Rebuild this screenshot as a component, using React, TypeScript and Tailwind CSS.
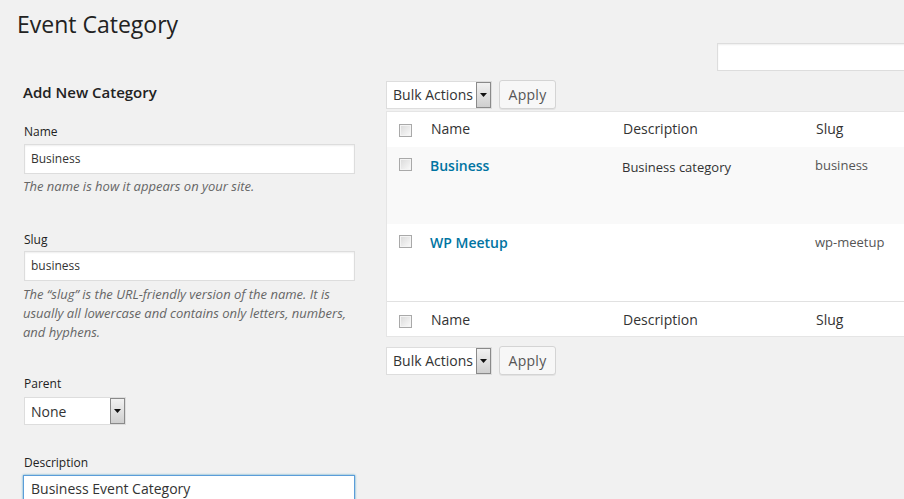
import React from "react";

function Checkbox() {
  return (
    <div className="h-[13px] w-[13px] border border-[#a9a9a9] bg-gradient-to-br from-[#d9d9d9] to-[#fbfbfb] shadow-[inset_0_0_0_1px_#f4f4f4]" />
  );
}

function Select({ label, width }: { label: string; width: string }) {
  return (
    <div className={`flex h-[28px] ${width} items-stretch border border-[#ddd] bg-white`}>
      <div className="flex flex-1 items-center pl-[6px] text-[14px] text-[#333]">{label}</div>
      <div className="flex w-[15px] items-center justify-center border border-[#8a8a8a] bg-gradient-to-b from-[#f2f2f2] to-[#cfcfcf]">
        <svg width="7" height="4" viewBox="0 0 7 4">
          <path d="M0 0h7L3.5 4z" fill="#111" />
        </svg>
      </div>
    </div>
  );
}

function ApplyButton() {
  return (
    <div className="flex h-[29px] w-[57px] items-center justify-center rounded-[3px] border border-[#d4d4d4] bg-[#f7f7f7] text-[14px] tracking-[0.3px] text-[#555] shadow-[0_1px_0_rgba(0,0,0,0.06)]">
      Apply
    </div>
  );
}

function BulkBar() {
  return (
    <div className="flex items-center gap-[7px]">
      <Select label="Bulk Actions" width="w-[106px]" />
      <ApplyButton />
    </div>
  );
}

function HeadRow({ top }: { top: boolean }) {
  return (
    <div className={`flex h-[35px] ${top ? "" : "border-t border-[#e1e1e1]"} bg-white`}>
      <div className={`w-[34px] pl-[12px] ${top ? "pt-[12px]" : "pt-[13px]"}`}>
        <Checkbox />
      </div>
      <div className={`w-[192px] pl-[10px] ${top ? "pt-[7px]" : "pt-[8px]"} text-[14px] leading-[20px] text-[#333]`}>Name</div>
      <div className={`w-[193px] pl-[10px] ${top ? "pt-[7px]" : "pt-[8px]"} text-[14px] leading-[20px] text-[#333]`}>Description</div>
      <div className={`flex-1 pl-[10px] ${top ? "pt-[7px]" : "pt-[8px]"} text-[14px] leading-[20px] text-[#333]`}>Slug</div>
    </div>
  );
}

function BodyRow({ name, desc, slug, alt }: { name: string; desc: string; slug: string; alt: boolean }) {
  return (
    <div className={`flex h-[77px] ${alt ? "bg-[#f9f9f9]" : "bg-white"}`}>
      <div className="w-[34px] pl-[12px] pt-[11px]">
        <Checkbox />
      </div>
      <div className="w-[192px] pl-[9px] pt-[9px] text-[14px] font-semibold leading-[20px] text-[#0074a2]">{name}</div>
      <div className="w-[193px] pl-[9px] pt-[10px] text-[13px] leading-[20px] text-[#333]">{desc}</div>
      <div className="flex-1 pl-[9px] pt-[8px] text-[13px] leading-[20px] text-[#555]">{slug}</div>
    </div>
  );
}

export default function App() {
  return (
    <div className="h-[499px] w-[904px] overflow-hidden bg-[#f1f1f1] font-['Open_Sans',sans-serif] text-[#444]">
      <div className="mt-[10px] h-[29px] pl-[17px] text-[23px] leading-[29px] text-[#222]">Event Category</div>

      <div className="flex">
        {/* add form */}
        <div className="ml-[23px] w-[332px] shrink-0">
          <div className="mt-[43px] text-[15px] font-semibold leading-[20px] text-[#222]">Add New Category</div>

          <div className="ml-[1px] mt-[22px] text-[12px] leading-[16px] text-[#222]">Name</div>
          <div className="ml-[1px] mt-[4px] flex h-[30px] items-center border border-[#ddd] bg-white pl-[6px] text-[12px] text-[#333] shadow-[inset_0_1px_2px_rgba(0,0,0,0.07)]">
            Business
          </div>
          <p className="mt-[3px] text-[13px] italic leading-[19px] text-[#666]">The name is how it appears on your site.</p>

          <div className="ml-[1px] mt-[36px] text-[12px] leading-[16px] text-[#222]">Slug</div>
          <div className="ml-[1px] mt-[3px] flex h-[30px] items-center border border-[#ddd] bg-white pl-[6px] text-[12px] text-[#333] shadow-[inset_0_1px_2px_rgba(0,0,0,0.07)]">
            business
          </div>
          <p className="mt-[4px] text-[13px] italic leading-[19px] text-[#666]">
            The “slug” is the URL-friendly version of the name. It is usually all lowercase and contains only letters, numbers, and hyphens.
          </p>

          <div className="ml-[1px] mt-[34px] text-[12px] leading-[16px] text-[#222]">Parent</div>
          <div className="ml-[1px] mt-[5px]">
            <Select label="None" width="w-[102px]" />
          </div>

          <div className="ml-[1px] mt-[30px] text-[12px] leading-[16px] text-[#222]">Description</div>
          <div className="mt-[4px] flex h-[40px] items-start border border-[#5b9dd9] bg-white pl-[7px] pt-[3px] text-[14px] leading-[20px] text-[#333] shadow-[0_0_2px_rgba(30,140,190,0.8)]">
            Business Event Category
          </div>
        </div>

        {/* list table */}
        <div className="ml-[31px] w-[540px] shrink-0">
          <div className="ml-[331px] mt-[4px] h-[28px] w-[220px] border border-[#ddd] bg-white shadow-[inset_0_1px_2px_rgba(0,0,0,0.07)]" />

          <div className="mt-[9px]">
            <BulkBar />
          </div>

          <div className="mt-[2px] border border-[#e5e5e5] bg-white">
            <HeadRow top />
            <BodyRow name="Business" desc="Business category" slug="business" alt />
            <BodyRow name="WP Meetup" desc="" slug="wp-meetup" alt={false} />
            <HeadRow top={false} />
          </div>

          <div className="mt-[9px]">
            <BulkBar />
          </div>
        </div>
      </div>
    </div>
  );
}
